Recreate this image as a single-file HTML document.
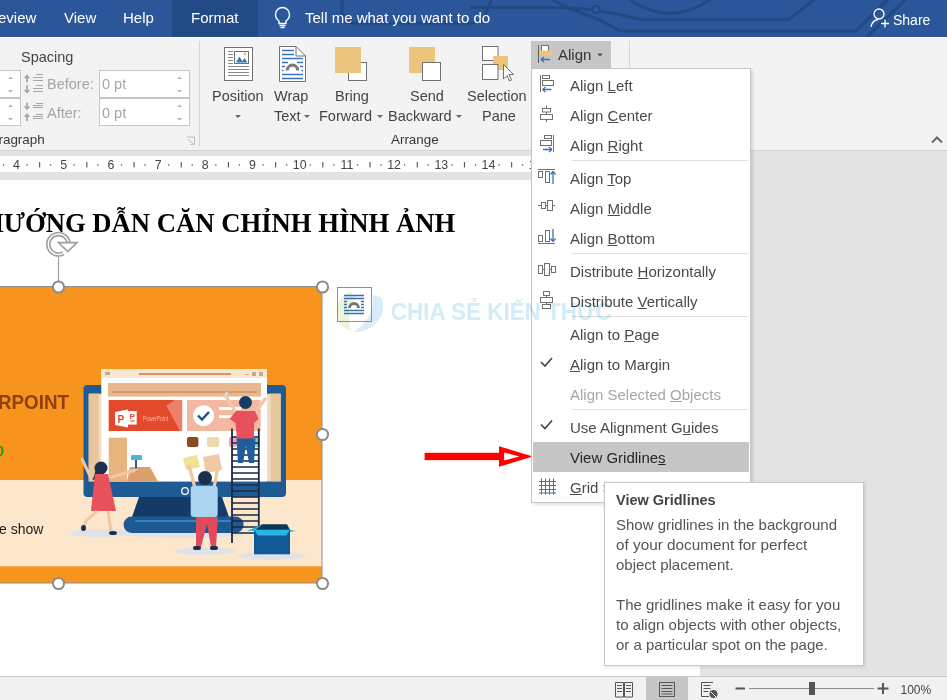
<!DOCTYPE html>
<html><head><meta charset="utf-8">
<style>
*{margin:0;padding:0;box-sizing:border-box}
html,body{width:947px;height:700px;overflow:hidden;background:#fff;font-family:"Liberation Sans",sans-serif}
.a{position:absolute;white-space:nowrap;line-height:1}
#tabs{position:absolute;left:0;top:0;width:947px;height:37px;background:#2b579a;overflow:hidden}
#tabs .t{position:absolute;color:#fff;font-size:15px;line-height:1;top:9.5px;white-space:nowrap}
#ribbon{position:absolute;left:0;top:37px;width:947px;height:114px;background:#f3f3f3;border-top:1px solid #fbfbfb;border-bottom:1px solid #d4d4d4}
.rt{position:absolute;color:#444;font-size:14.5px;line-height:1;white-space:nowrap}
.gl{position:absolute;color:#444;font-size:13.5px;line-height:1;white-space:nowrap}
#ruler{position:absolute;left:0;top:151px;width:947px;height:29px;background:#e3e3e3}
#doc{position:absolute;left:0;top:180px;width:947px;height:496px;background:#e3e3e3}
#page{position:absolute;left:0;top:0;width:700px;height:496px;background:#fff}
#status{position:absolute;left:0;top:676px;width:947px;height:24px;background:#f1f1f1;border-top:1px solid #c8c8c8}
#menu{position:absolute;left:531px;top:68px;width:220px;height:435px;background:#fff;border:1px solid #c6c6c6;box-shadow:2px 2px 3px rgba(0,0,0,.12)}
.mi{position:absolute;left:38px;color:#4a4a4a;font-size:15px;line-height:1;white-space:nowrap}
.mi u{text-decoration:underline;text-decoration-thickness:1px;text-underline-offset:1px}
.sep{position:absolute;left:40px;right:2px;height:1px;background:#e1e1e1}
#tip{position:absolute;left:604px;top:482px;width:260px;height:184px;background:#fff;border:1px solid #c8c8c8;box-shadow:1px 1px 3px rgba(0,0,0,.12)}
.rn{position:absolute;top:158.5px;width:40px;text-align:center;color:#444;font-size:12.4px;line-height:1}
.tp{position:absolute;left:11px;color:#555;font-size:15px;line-height:1;white-space:nowrap}
</style></head><body>

<!-- TAB BAR -->
<div id="tabs">
  <svg style="position:absolute;left:0;top:0" width="947" height="37">
    <g fill="none" stroke="#204a84" stroke-width="3.2">
      <path d="M470 7.5 H560 L592 9.5"/>
      <circle cx="596" cy="9.5" r="3.5" stroke-width="2.2"/>
      <path d="M599.5 11 Q620 14 640 19.5 H789 L815 -1"/>
      <path d="M551 -1 Q575 12 600 20 L620 31 H856 L888 -1"/>
      <path d="M866 38 L906 -1"/>
      <path d="M629 -1 Q670 28 711 -1"/>
      <path d="M342 -1 V14 Q342 23 352 23 H470 Q480 23 485 15 L492 -1"/>
    </g>
    <!-- lightbulb -->
    <g fill="none" stroke="#fff" stroke-width="1.4">
      <path d="M279 23.5 V21 Q275.5 18.5 275.5 14.5 A7 7 0 0 1 289.5 14.5 Q289.5 18.5 286 21 V23.5z"/>
      <path d="M279.5 25.5 h6 M280.5 27.5 h4"/>
    </g>
    <!-- share person -->
    <g fill="none" stroke="#fff" stroke-width="1.3">
      <circle cx="879" cy="14" r="5"/>
      <path d="M871 27 Q872 20.5 878 19.5"/>
      <path d="M881 23.5 h8 M885 19.5 v8"/>
    </g>
  </svg>
  <div class="t" style="left:-2px">eview</div>
  <div class="t" style="left:64px">View</div>
  <div class="t" style="left:123px">Help</div>
  <div style="position:absolute;left:172px;top:0;width:86px;height:37px;background:#224a85"></div>
  <div class="t" style="left:191px">Format</div>
  <div class="t" style="left:305px">Tell me what you want to do</div>
  <div class="t" style="left:893px;font-size:14px;top:13px">Share</div>
  
</div>

<!-- RIBBON -->
<div id="ribbon"></div>
<!-- Spacing group -->
<div class="rt" style="left:21px;top:50px">Spacing</div>
<div style="position:absolute;left:-2px;top:70px;width:23px;height:28px;background:#fff;border:1px solid #c6c6c6"></div>
<div style="position:absolute;left:-2px;top:98px;width:23px;height:28px;background:#fff;border:1px solid #c6c6c6"></div>
<div style="position:absolute;left:99px;top:70px;width:91px;height:28px;background:#fff;border:1px solid #c6c6c6"></div>
<div style="position:absolute;left:99px;top:98px;width:91px;height:28px;background:#fff;border:1px solid #c6c6c6"></div>
<svg style="position:absolute;left:0;top:37px" width="200" height="114">
  <g fill="#b4b4b4">
    <path d="M8 42 l2.5 -2.5 l2.5 2.5z M8 53 l2.5 2.5 l2.5 -2.5z M8 70 l2.5 -2.5 l2.5 2.5z M8 81 l2.5 2.5 l2.5 -2.5z"/>
    <path d="M177 42 l2.5 -2.5 l2.5 2.5z M177 53 l2.5 2.5 l2.5 -2.5z M177 70 l2.5 -2.5 l2.5 2.5z M177 81 l2.5 2.5 l2.5 -2.5z"/>
  </g>
  <g fill="#a6a6a6">
    <path d="M27 37.3 L30.2 41.3 H23.8z M26.1 41 h1.8 v4.2 h-1.8z"/>
    <path d="M27 56.7 L30.2 52.7 H23.8z M26.1 48.3 h1.8 v4.6 h-1.8z"/>
    <path d="M27 73.3 L30.2 69.3 H23.8z M26.1 65.8 h1.8 v3.8 h-1.8z"/>
    <path d="M27 76 L30.2 80 H23.8z M26.1 79.7 h1.8 v4.3 h-1.8z"/>
  </g>
  <g stroke="#a6a6a6" stroke-width="1" fill="none">
    <path d="M36 37.5 h7 M33 40.5 h10 M33 43.5 h10 M36 48.5 h7 M33 51.5 h10 M33 54.5 h10"/>
    <path d="M36 66.5 h7 M33 68.5 h10 M33 70.5 h10 M36 77.5 h7 M33 79.5 h10 M33 81.5 h10"/>
  </g>
  <g stroke="#b8b8b8" stroke-width="1" fill="none"><path d="M186.5 100 h8 v8 M188 102 l5 5 M190.5 107.5 h3"/></g>
  <rect x="199" y="4" width="1" height="105" fill="#d6d6d6"/>
</svg>
<div class="rt" style="left:47px;top:77px;color:#a6a6a6">Before:</div>
<div class="rt" style="left:47px;top:106px;color:#a6a6a6">After:</div>
<div class="rt" style="left:102px;top:77px;color:#a6a6a6">0 pt</div>
<div class="rt" style="left:102px;top:106px;color:#a6a6a6">0 pt</div>
<div class="gl" style="left:-1.5px;top:133px;font-size:13.4px;color:#383838">ragraph</div>

<!-- Arrange group -->
<svg style="position:absolute;left:200px;top:37px" width="440" height="114">
  <!-- Position -->
  <g transform="translate(-200,-37)">
    <rect x="224.5" y="47.5" width="28" height="33" fill="#fff" stroke="#707070"/>
    <g stroke="#8a8a8a" stroke-width="1"><path d="M228 51.5h5M228 54.5h5M228 57.5h5M228 60.5h5M228 63.5h5M228 66.5h21M228 69.5h21M228 72.5h21M228 75.5h21"/></g>
    <rect x="234.5" y="51.5" width="14" height="12" fill="#fff" stroke="#707070"/>
    <path d="M236 62.5 L239.5 56.5 L243 62.5z M241.5 62.5 L244.5 58 L247.5 62.5z" fill="#3b73b9"/>
    <circle cx="245" cy="54" r="1.4" fill="#f2c06b"/>
    <!-- Wrap text -->
    <path d="M279.5 46.5 H296 L305.5 56 V81.5 H279.5z" fill="#fff" stroke="#707070"/>
    <path d="M296 46.5 V56 H305.5" fill="none" stroke="#707070"/>
    <g stroke="#3b73b9" stroke-width="1.3"><path d="M282 50.5h12M282 54.5h12M282 58.5h21M282 62.5h6M297 62.5h6M282 66.5h3M300 66.5h3M282 70.5h1.5M301.5 70.5h1.5M282 74.5h21M282 78.5h21"/></g>
    <path d="M287.2 70.5 A5.3 5.3 0 0 1 297.8 70.5" fill="none" stroke="#7a7a7a" stroke-width="3.2"/>
    <!-- Bring forward -->
    <rect x="348.5" y="62.5" width="18" height="18" fill="#fff" stroke="#707070"/>
    <rect x="335" y="47" width="26" height="26" fill="#ebc57c"/>
    <!-- Send backward -->
    <rect x="409" y="47" width="26" height="26" fill="#ebc57c"/>
    <rect x="422.5" y="62.5" width="18" height="18" fill="#fff" stroke="#707070"/>
    <!-- Selection pane -->
    <rect x="482.5" y="46.5" width="15.5" height="14" fill="#fff" stroke="#707070"/>
    <rect x="493" y="56" width="15" height="14" fill="#ebc57c"/>
    <rect x="482.5" y="64.5" width="15.5" height="15" fill="#fff" stroke="#707070"/>
    <path d="M503.5 64.5 V79 L507 75.5 L509.5 81 L511.5 80 L509 74.5 L513.5 74.5z" fill="#fff" stroke="#707070"/>
    <!-- carets -->
    <g fill="#6a6a6a"><path d="M235 115 h6 l-3 3z M304 115 h6 l-3 3z M377 115 h6 l-3 3z M456 115 h6 l-3 3z"/></g>
    <!-- divider -->
    <rect x="629" y="41" width="1" height="105" fill="#d6d6d6"/>
  </g>
</svg>
<div class="rt" style="left:212px;top:89px">Position</div>
<div class="rt" style="left:274px;top:89px">Wrap</div>
<div class="rt" style="left:274px;top:109px">Text</div>
<div class="rt" style="left:335px;top:89px">Bring</div>
<div class="rt" style="left:319px;top:109px">Forward</div>
<div class="rt" style="left:410px;top:89px">Send</div>
<div class="rt" style="left:388px;top:109px">Backward</div>
<div class="rt" style="left:467px;top:89px">Selection</div>
<div class="rt" style="left:482px;top:109px">Pane</div>
<div class="gl" style="left:391px;top:133px;font-size:13.4px;color:#383838">Arrange</div>
<!-- Align button -->
<div style="position:absolute;left:531px;top:41px;width:80px;height:27px;background:#c6c6c6"></div>
<svg style="position:absolute;left:531px;top:41px" width="80" height="27">
  <rect x="7" y="4" width="1" height="18" fill="#606060"/>
  <rect x="10.5" y="4.5" width="7" height="6" fill="#fff" stroke="#707070"/>
  <rect x="9" y="9.5" width="12" height="5" fill="#ebc57c"/>
  <path d="M10 18.5 h9 M10 18.5 l3 -2.5 M10 18.5 l3 2.5" stroke="#3b73b9" stroke-width="1.5" fill="none"/>
  <path d="M66 12.5 h6 l-3 3z" fill="#555"/>
</svg>
<div class="rt" style="left:558px;top:46.5px;font-size:15px;color:#333">Align</div>
<svg style="position:absolute;left:930px;top:134px" width="14" height="10"><path d="M2 8.5 L7 3.5 L12 8.5" fill="none" stroke="#666" stroke-width="2"/></svg>

<!-- RULER -->
<div id="ruler">
  <div style="position:absolute;left:0;top:5px;width:700px;height:16px;background:#fff"></div>
</div>
<svg style="position:absolute;left:0;top:0" width="700" height="180"><g fill="#555"><rect x="-44.4" y="164.3" width="1.3" height="1.3"/><rect x="-20.8" y="164.3" width="1.3" height="1.3"/><rect x="-8.1" y="162" width="1.1" height="5.5"/><rect x="2.8" y="164.3" width="1.3" height="1.3"/><rect x="26.4" y="164.3" width="1.3" height="1.3"/><rect x="39.1" y="162" width="1.1" height="5.5"/><rect x="50.0" y="164.3" width="1.3" height="1.3"/><rect x="73.6" y="164.3" width="1.3" height="1.3"/><rect x="86.3" y="162" width="1.1" height="5.5"/><rect x="97.2" y="164.3" width="1.3" height="1.3"/><rect x="120.8" y="164.3" width="1.3" height="1.3"/><rect x="133.5" y="162" width="1.1" height="5.5"/><rect x="144.4" y="164.3" width="1.3" height="1.3"/><rect x="168.0" y="164.3" width="1.3" height="1.3"/><rect x="180.7" y="162" width="1.1" height="5.5"/><rect x="191.6" y="164.3" width="1.3" height="1.3"/><rect x="215.2" y="164.3" width="1.3" height="1.3"/><rect x="227.9" y="162" width="1.1" height="5.5"/><rect x="238.8" y="164.3" width="1.3" height="1.3"/><rect x="262.4" y="164.3" width="1.3" height="1.3"/><rect x="275.1" y="162" width="1.1" height="5.5"/><rect x="286.0" y="164.3" width="1.3" height="1.3"/><rect x="309.6" y="164.3" width="1.3" height="1.3"/><rect x="322.3" y="162" width="1.1" height="5.5"/><rect x="333.2" y="164.3" width="1.3" height="1.3"/><rect x="356.8" y="164.3" width="1.3" height="1.3"/><rect x="369.5" y="162" width="1.1" height="5.5"/><rect x="380.4" y="164.3" width="1.3" height="1.3"/><rect x="404.0" y="164.3" width="1.3" height="1.3"/><rect x="416.7" y="162" width="1.1" height="5.5"/><rect x="427.6" y="164.3" width="1.3" height="1.3"/><rect x="451.2" y="164.3" width="1.3" height="1.3"/><rect x="463.9" y="162" width="1.1" height="5.5"/><rect x="474.8" y="164.3" width="1.3" height="1.3"/><rect x="498.4" y="164.3" width="1.3" height="1.3"/><rect x="511.1" y="162" width="1.1" height="5.5"/><rect x="522.0" y="164.3" width="1.3" height="1.3"/><rect x="545.6" y="164.3" width="1.3" height="1.3"/><rect x="558.3" y="162" width="1.1" height="5.5"/></g></svg>
<div class="rn" style="left:-50.7px">3</div><div class="rn" style="left:-3.5px">4</div><div class="rn" style="left:43.7px">5</div><div class="rn" style="left:90.9px">6</div><div class="rn" style="left:138.1px">7</div><div class="rn" style="left:185.3px">8</div><div class="rn" style="left:232.5px">9</div><div class="rn" style="left:279.7px">10</div><div class="rn" style="left:326.9px">11</div><div class="rn" style="left:374.1px">12</div><div class="rn" style="left:421.3px">13</div><div class="rn" style="left:468.5px">14</div><div class="rn" style="left:515.7px">15</div>

<!-- DOC -->
<div id="doc"><div id="page"></div></div>
<!-- title -->
<div class="a" style="left:-17px;top:210px;font-family:'Liberation Serif',serif;font-weight:bold;font-size:26.67px;color:#000">HƯỚNG DẪN CĂN CHỈNH HÌNH ẢNH</div>
<!-- illustration -->
<svg style="position:absolute;left:0;top:0" width="700" height="676">
  <rect x="-205" y="286.5" width="527" height="296.5" fill="#f7941d"/>
  <rect x="-205" y="480" width="527" height="86.3" fill="#fde7cc"/>
  <!-- shadows -->
  <g fill="#dfe2e6"><ellipse cx="100" cy="533" rx="30" ry="4"/><ellipse cx="205" cy="551" rx="30" ry="4"/><ellipse cx="272" cy="556" rx="34" ry="4"/><ellipse cx="185" cy="534" rx="60" ry="4"/></g>
  <!-- monitor -->
  <rect x="83.5" y="385" width="202.5" height="112" rx="4" fill="#1e5b94"/>
  <rect x="88.7" y="393.7" width="192" height="87.7" fill="#f0dcc0"/>
  <rect x="88.7" y="393.7" width="10" height="87.7" fill="#e7c69c"/>
  <rect x="270.7" y="393.7" width="10" height="87.7" fill="#e7c69c"/>
  <circle cx="185" cy="491" r="3.3" fill="none" stroke="#fff" stroke-width="1.3"/>
  <path d="M139 497 H222 L229 517 H132z" fill="#133b66"/>
  <rect x="123.6" y="516.6" width="120" height="16.3" rx="8" fill="#1d5a92"/>
  <rect x="135" y="520" width="96" height="2" rx="1" fill="#3a82c4"/>
  <!-- browser window -->
  <rect x="101.3" y="369" width="165.7" height="112.4" fill="#fff"/>
  <rect x="101.3" y="369" width="165.7" height="9" fill="#f6e6d2"/>
  <rect x="139" y="373" width="92" height="2" fill="#d9916e"/>
  <g fill="#cfa58a"><rect x="105" y="372" width="5" height="3"/><rect x="245" y="374" width="4" height="1"/><rect x="252" y="372" width="4" height="4"/><rect x="259" y="372" width="4" height="4"/></g>
  <rect x="108" y="383" width="153" height="13.6" fill="#e8b88f"/>
  <rect x="112" y="391.5" width="145" height="1" fill="#c87b55"/>
  <rect x="108.7" y="400" width="73.4" height="31" fill="#e34a2c"/>
  <path d="M166.4 405.7 L175 400 H182.1 V431 H180z" fill="#ed8068"/>
  <path d="M115 412 L128 409.5 V427.5 L115 425z" fill="#fff"/>
  <rect x="128" y="411" width="8.7" height="13.6" fill="#fff"/>
  <text x="117.5" y="422.5" font-family="Liberation Sans" font-weight="bold" font-size="10" fill="#e34a2c">P</text>
  <text x="129.5" y="419" font-family="Liberation Sans" font-weight="bold" font-size="8" fill="#e34a2c">P</text>
  <rect x="130" y="420.5" width="5" height="1" fill="#e34a2c"/>
  <text x="143" y="421" font-family="Liberation Sans" font-size="6.3" fill="#f6b9a8" textLength="25" lengthAdjust="spacingAndGlyphs">PowerPoint</text>
  <rect x="187" y="400" width="73.7" height="31" fill="#f1b9a1"/>
  <circle cx="203.6" cy="415.7" r="10.5" fill="#fff"/>
  <path d="M198 415.5 L202 419.5 L209 412" fill="none" stroke="#1f4f86" stroke-width="2.4"/>
  <rect x="219" y="407" width="22" height="3" fill="#fff"/><rect x="219" y="415" width="16" height="3" fill="#fff"/>
  <rect x="187" y="437" width="11.4" height="10" rx="2" fill="#8a4a22"/>
  <rect x="207" y="437" width="12.3" height="10" rx="2" fill="#f0d8b0"/>
  <rect x="229" y="437" width="8" height="10" rx="2" fill="#f0a6b8"/>
  <rect x="254" y="437" width="6" height="10" rx="2" fill="#7ccbd0"/>
  <rect x="108.7" y="437.7" width="18.3" height="43.7" fill="#e7b37f"/>
  <path d="M127 481.4 L130 467 H150 L158 481.4z" fill="#dba16c"/>
  <path d="M183 458 L197 455 L200 467 L186 470z" fill="#f1e294"/>
  <path d="M203 457 L219 454 L222 470 L206 473z" fill="#efc9a4"/>
  <rect x="131" y="455" width="11" height="5" rx="1" fill="#4fb6ce"/>
  <rect x="135" y="460" width="2" height="12" fill="#2f5f8f"/>
  <!-- girl -->
  <path d="M82 459 L90 476 L97 476 M136 470 L108 478" stroke="#f3c6a4" stroke-width="3" fill="none" stroke-linecap="round"/>
  <circle cx="101" cy="468" r="6.5" fill="#1c2f4f"/>
  <path d="M96 468 Q94 478 92 480 L100 478z" fill="#1c2f4f"/>
  <path d="M95 474 H108 L116 511 H91z" fill="#e8505b"/>
  <path d="M97 511 L86 521 L84 527 M108 511 L111 532" stroke="#f3c6a4" stroke-width="3" fill="none"/>
  <g fill="#1c2f4f"><ellipse cx="83.5" cy="528" rx="2.5" ry="3"/><ellipse cx="113" cy="533" rx="4" ry="2"/></g>
  <!-- ladder -->
  <g stroke="#1a2a40" stroke-width="1.8"><path d="M232 428.5 V543 M258.8 428.5 V543"/>
  <path d="M232 437 H259 M232 443 H259 M232 449 H259 M232 455 H259 M232 461 H259 M232 467 H259 M232 473 H259 M232 479 H259 M232 485 H259 M232 491 H259 M232 497 H259 M232 503 H259 M232 509 H259 M232 515 H259 M232 521 H259 M232 527 H259 M232 533 H259" stroke-width="1.6"/></g>
  <!-- boy on ladder -->
  <path d="M236 413 L226 396 M255 413 L265 399" stroke="#f3c6a4" stroke-width="3.2" fill="none" stroke-linecap="round"/>
  <path d="M225 398 L227 392" stroke="#d8d8d8" stroke-width="3"/>
  <path d="M229.5 419 L236 411 H255 L258.5 419 L254 423 V439 H237 L235.5 423z" fill="#e8505b"/>
  <circle cx="245.5" cy="402.5" r="6.5" fill="#163c66"/>
  <path d="M236.5 438.6 H255.5 L254 463 H249 L246 446 L243 463 H238z" fill="#215d9a"/>
  <!-- boy center -->
  <path d="M195 488 L189 466 M214 488 L218 466" stroke="#f3c6a4" stroke-width="3.2" fill="none" stroke-linecap="round"/>
  <rect x="190.7" y="485.7" width="27" height="31.3" rx="3" fill="#a9d6ee"/>
  <circle cx="205" cy="478" r="7" fill="#1c2f4f"/>
  <path d="M196 517 H217.9 L216 547 H211 L207 524 L201 547 H196z" fill="#e04a5a"/>
  <g fill="#1c2f4f"><rect x="193" y="546" width="8" height="4" rx="2"/><rect x="210" y="546" width="8" height="4" rx="2"/></g>
  <!-- box -->
  <path d="M262 524.3 H287 L290 530 H254z" fill="#0d3558"/>
  <rect x="254" y="529.7" width="36" height="24.6" fill="#105b97"/>
  <path d="M254 529.7 H290 L286 535.5 H258z" fill="#2ab4e8"/>
  <path d="M247 531 L262 524.5 L254 531z M290 529.7 L296 531 L290 532z" fill="#2ab4e8"/>
  <!-- text -->
  <text x="-2" y="408.7" font-family="Liberation Sans" font-weight="bold" font-size="21" fill="#8f400c" textLength="71" lengthAdjust="spacingAndGlyphs">RPOINT</text>
  <text x="-12.5" y="455.5" font-family="Liberation Sans" font-weight="bold" font-size="15" fill="#1a9a1a">20</text>
  <text x="-1" y="534.4" font-family="Liberation Sans" font-size="14" fill="#1a1a1a">e show</text>
  <!-- selection border -->
  <rect x="-205" y="286.5" width="527" height="296.5" fill="none" stroke="#8e8e8e" stroke-width="1"/>
  <path d="M58.5 257 V281" stroke="#a0a0a0" stroke-width="1.2"/>
  <g fill="#fff" stroke="#8c8c8c" stroke-width="2">
    <circle cx="58.5" cy="287" r="5.6"/><circle cx="322.5" cy="287" r="5.6"/><circle cx="322.5" cy="434.5" r="5.6"/><circle cx="322.5" cy="583.5" r="5.6"/><circle cx="58.5" cy="583.5" r="5.6"/>
  </g>
  <!-- rotation handle -->
  <g fill="none">
    <path d="M63.29 253.31 A10.2 10.2 0 1 1 68.70 244.30" stroke="#9e9e9e" stroke-width="4.6"/>
    <path d="M64.06 252.85 A10.2 10.2 0 1 1 68.66 243.41" stroke="#fff" stroke-width="1.4"/>
    <path d="M58.5 242.6 L77 242.6 L67.7 251.6z" fill="#fff" stroke="#9e9e9e" stroke-width="1.6" stroke-linejoin="miter"/>
  </g>
  <path d="M350 291 Q333 300 337 318 Q341 329 352 331 Q344 316 356 297z" fill="#eef4dc"/>
  <path d="M381 297 Q388 312 374 325 Q364 333 354 332 Q366 324 371 312 Q374 304 372 295z" fill="#d8edf9"/>
  <!-- layout options -->
  <rect x="337.5" y="287.5" width="34" height="34" fill="none" stroke="#8f8f8f"/>
  <g stroke="#3b6fb4" stroke-width="1.3"><path d="M344 295.5h20M344 298.5h20M344 301.5h3M361 301.5h3M344 304.5h3M361 304.5h3M344 307.5h3M361 307.5h3M344 310.5h20M344 313.5h20"/></g>
  <path d="M349.5 308 A4.5 4.5 0 0 1 358.5 308" fill="none" stroke="#727a70" stroke-width="2.8"/>
  <!-- arrow -->
  <rect x="424.6" y="452.8" width="75" height="7.3" fill="#fe0000"/>
  <path d="M499 446.3 L533 456.4 L499 466.8z M504.2 452.6 V460.4 L519.5 456.5z" fill="#fe0000" fill-rule="evenodd"/>
</svg>

<!-- STATUS -->
<div id="status"></div>
<div style="position:absolute;left:646px;top:677px;width:42px;height:23px;background:#c6c6c6"></div>
<svg style="position:absolute;left:600px;top:676px" width="347" height="24">
  <g transform="translate(-600,-676)" fill="none" stroke="#555" stroke-width="1">
    <!-- read mode -->
    <path d="M615.5 682.5 H623.5 V697 H615.5z M624.5 682.5 H632.5 V697 H624.5z"/>
    <path d="M617 685.5h5M617 688.5h5M617 691.5h5M626 685.5h5M626 688.5h5M626 691.5h5"/>
    <!-- print layout -->
    <rect x="659.5" y="682.5" width="15" height="14"/>
    <path d="M661.5 685.5h11M661.5 688.5h11M661.5 691.5h11M661.5 694h11"/>
    <!-- web layout -->
    <path d="M713 682.5 H701.5 V696.5 H709"/>
    <path d="M703.5 685.5h7M703.5 688.5h7M703.5 691.5h5"/>
    <circle cx="713.5" cy="694" r="4" fill="#555" stroke="none"/>
    <path d="M711 692 l5 5" stroke="#fff" stroke-width="1"/>
    <!-- zoom -->
    <path d="M735.5 688.5 h9.5" stroke-width="2"/>
    <path d="M749 688.5 h125" stroke="#8a8a8a"/>
    <rect x="809" y="682" width="6" height="13" fill="#555" stroke="none"/>
    <path d="M877.5 688.5 h11 M883 683 v11" stroke-width="2"/>
  </g>
</svg>
<div class="a" style="left:900.5px;top:683.5px;font-size:12px;color:#444">100%</div>

<!-- MENU -->
<div id="menu">
<div style="position:absolute;left:1px;top:373px;width:216px;height:30px;background:#c6c6c6"></div>
<div class="sep" style="top:91.0px"></div>
<div class="sep" style="top:183.8px"></div>
<div class="sep" style="top:247.0px"></div>
<div class="sep" style="top:340.4px"></div>
<div class="mi" style="top:9.3px">Align <u>L</u>eft</div>
<div class="mi" style="top:39.3px">Align <u>C</u>enter</div>
<div class="mi" style="top:69.3px">Align <u>R</u>ight</div>
<div class="mi" style="top:102.3px">Align <u>T</u>op</div>
<div class="mi" style="top:132.3px">Align <u>M</u>iddle</div>
<div class="mi" style="top:162.0px">Align <u>B</u>ottom</div>
<div class="mi" style="top:195.3px">Distribute <u>H</u>orizontally</div>
<div class="mi" style="top:225.3px">Distribute <u>V</u>ertically</div>
<div class="mi" style="top:258.3px">Align to <u>P</u>age</div>
<div class="mi" style="top:288.3px"><u>A</u>lign to Margin</div>
<div class="mi" style="top:318.3px;color:#a6a6a6">Align Selected <u>O</u>bjects</div>
<div class="mi" style="top:351.2px">Use Alignment G<u>u</u>ides</div>
<div class="mi" style="top:381.2px;color:#262626">View Gridline<u>s</u></div>
<div class="mi" style="top:411.2px"><u>G</u>rid Settings...</div>
<svg style="position:absolute;left:-1px;top:-1px" width="220" height="435">
<g transform="translate(-531,-68)" fill="none" stroke="#707070" stroke-width="1">
  <!-- align left -->
  <path d="M540.5 75 V92"/>
  <rect x="542.5" y="75.5" width="7" height="3"/>
  <rect x="542.5" y="80.5" width="11" height="5"/>
  <path d="M542.5 89.5 H551.5 M542.5 89.5 l3 -2.5 M542.5 89.5 l3 2.5" stroke="#3b73b9" stroke-width="1.3"/>
  <!-- align center -->
  <path d="M546.5 105.5 V122"/>
  <rect x="542.5" y="108.5" width="8" height="3.5" fill="#fff"/>
  <rect x="540.5" y="114.5" width="12" height="5" fill="#fff"/>
  <!-- align right -->
  <path d="M553.5 135 V152"/>
  <rect x="544.5" y="135.5" width="7" height="3"/>
  <rect x="540.5" y="140.5" width="11" height="5"/>
  <path d="M543 149.5 H552 M552 149.5 l-3 -2.5 M552 149.5 l-3 2.5" stroke="#3b73b9" stroke-width="1.3"/>
  <!-- align top -->
  <path d="M538 169.5 H555"/>
  <rect x="538.5" y="171.5" width="4" height="6"/>
  <rect x="545.5" y="171.5" width="4" height="11"/>
  <path d="M553 184 V172 M553 171.5 l-2.5 3 M553 171.5 l2.5 3" stroke="#3b73b9" stroke-width="1.3"/>
  <!-- align middle -->
  <path d="M538 205.5 H555" />
  <rect x="541.5" y="202.5" width="4" height="6" fill="#fff"/>
  <rect x="547.5" y="200.5" width="5" height="10" fill="#fff"/>
  <!-- align bottom -->
  <path d="M538 243.5 H555"/>
  <rect x="538.5" y="235.5" width="4" height="6"/>
  <rect x="545.5" y="230.5" width="4" height="11"/>
  <path d="M553 229 V241 M553 241.5 l-2.5 -3 M553 241.5 l2.5 -3" stroke="#3b73b9" stroke-width="1.3"/>
  <!-- distribute h -->
  <rect x="538.5" y="265.5" width="4" height="8"/>
  <rect x="544.5" y="263.5" width="5" height="12"/>
  <rect x="551.5" y="266.5" width="4" height="6"/>
  <path d="M542.5 269.5 H544.5 M549.5 269.5 H551.5"/>
  <!-- distribute v -->
  <rect x="543.5" y="291.5" width="6" height="4"/>
  <rect x="540.5" y="297.5" width="12" height="5"/>
  <rect x="542.5" y="304.5" width="8" height="4"/>
  <path d="M546.5 295.5 V297.5 M546.5 302.5 V304.5"/>
  <!-- checks -->
  <path d="M541 362 L545 366 L552 358" stroke="#444" stroke-width="1.6"/>
  <path d="M541 424.5 L545 428.5 L552 420.5" stroke="#444" stroke-width="1.6"/>
  <!-- grid -->
  <path d="M541.5 478.5 V494.5 M545.5 478.5 V494.5 M549.5 478.5 V494.5 M553.5 478.5 V494.5 M539 481.5 H556 M539 485.5 H556 M539 489.5 H556 M539 493 H556" stroke="#3b73b9"/>
</g></svg>
</div>

<!-- TOOLTIP -->
<div id="tip">
  <div class="tp" style="top:10px;font-weight:bold;font-size:14.5px;color:#444">View Gridlines</div>
  <div class="tp" style="top:34px">Show gridlines in the background</div>
  <div class="tp" style="top:54px;font-size:15.3px">of your document for perfect</div>
  <div class="tp" style="top:74px">object placement.</div>
  <div class="tp" style="top:114px">The gridlines make it easy for you</div>
  <div class="tp" style="top:134px">to align objects with other objects,</div>
  <div class="tp" style="top:154px">or a particular spot on the page.</div>
</div>

<!-- watermark -->
<svg style="position:absolute;left:0;top:0;pointer-events:none;mix-blend-mode:multiply" width="947" height="700">
  <text x="390.8" y="320.4" font-family="Liberation Sans" font-weight="bold" font-size="24.7" fill="#d3ecf9" textLength="221" lengthAdjust="spacingAndGlyphs">CHIA SẺ KIẾN THỨC</text>
</svg>
</body></html>
